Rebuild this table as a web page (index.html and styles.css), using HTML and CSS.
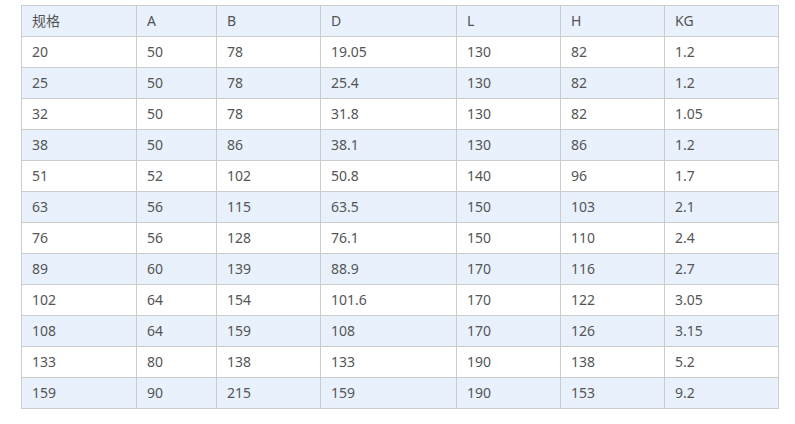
FILE: index.html
```html
<!DOCTYPE html>
<html lang="zh">
<head>
<meta charset="utf-8">
<link rel="stylesheet" href="styles.css">
</head>
<body>
<table class="spec">
<colgroup>
<col class="c1"><col class="c2"><col class="c3"><col class="c4"><col class="c5"><col class="c6"><col class="c7">
</colgroup>
<tr class="head"><td>规格</td><td>A</td><td>B</td><td>D</td><td>L</td><td>H</td><td>KG</td></tr>
<tr><td>20</td><td>50</td><td>78</td><td>19.05</td><td>130</td><td>82</td><td>1.2</td></tr>
<tr class="alt"><td>25</td><td>50</td><td>78</td><td>25.4</td><td>130</td><td>82</td><td>1.2</td></tr>
<tr><td>32</td><td>50</td><td>78</td><td>31.8</td><td>130</td><td>82</td><td>1.05</td></tr>
<tr class="alt"><td>38</td><td>50</td><td>86</td><td>38.1</td><td>130</td><td>86</td><td>1.2</td></tr>
<tr><td>51</td><td>52</td><td>102</td><td>50.8</td><td>140</td><td>96</td><td>1.7</td></tr>
<tr class="alt"><td>63</td><td>56</td><td>115</td><td>63.5</td><td>150</td><td>103</td><td>2.1</td></tr>
<tr><td>76</td><td>56</td><td>128</td><td>76.1</td><td>150</td><td>110</td><td>2.4</td></tr>
<tr class="alt"><td>89</td><td>60</td><td>139</td><td>88.9</td><td>170</td><td>116</td><td>2.7</td></tr>
<tr><td>102</td><td>64</td><td>154</td><td>101.6</td><td>170</td><td>122</td><td>3.05</td></tr>
<tr class="alt"><td>108</td><td>64</td><td>159</td><td>108</td><td>170</td><td>126</td><td>3.15</td></tr>
<tr><td>133</td><td>80</td><td>138</td><td>133</td><td>190</td><td>138</td><td>5.2</td></tr>
<tr class="alt"><td>159</td><td>90</td><td>215</td><td>159</td><td>190</td><td>153</td><td>9.2</td></tr>
</table>
</body>
</html>
```
FILE: styles.css
```css
html, body {
  margin: 0;
  padding: 0;
  background: #ffffff;
}
body {
  font-family: "Noto Sans", "Noto Sans CJK SC", sans-serif;
  font-size: 14px;
  color: #555555;
}
.spec {
  border-collapse: collapse;
  table-layout: fixed;
  width: 757px;
  margin: 5px 0 0 21px;
}
.c1 { width: 115px; }
.c2 { width: 80px; }
.c3 { width: 104px; }
.c4 { width: 136px; }
.c5 { width: 104px; }
.c6 { width: 104px; }
.c7 { width: 114px; }
.spec td {
  border: 1px solid #cccccc;
  height: 30px;
  padding: 0 0 0 10px;
  box-sizing: border-box;
  line-height: 30px;
  vertical-align: middle;
  white-space: nowrap;
}
.spec tr { height: 31px; }
.head td, .alt td {
  background: #e9f1fc;
}
```
